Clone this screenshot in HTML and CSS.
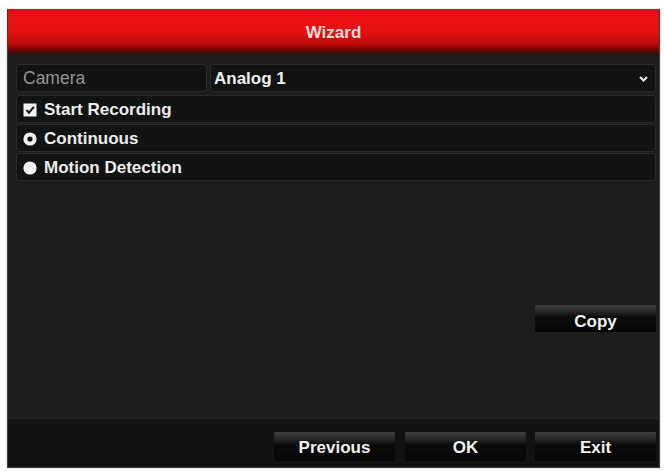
FILE: index.html
```html
<!DOCTYPE html>
<html>
<head>
<meta charset="utf-8">
<link rel="stylesheet" href="styles.css">
</head>
<body>
<div class="dialog">
  <div class="header">Wizard</div>
  <div class="content">
    <div class="camera-row">
      <div class="cell label">Camera</div>
      <div class="cell value">
        <span>Analog 1</span>
        <svg class="chevron" width="9" height="6" viewBox="0 0 9 6"><polyline points="1,1 4.5,4.5 8,1" fill="none" stroke="#eee" stroke-width="2"/></svg>
      </div>
    </div>
    <div class="options">
      <div class="row">
        <svg class="icon" width="14" height="14" viewBox="0 0 14 14"><rect x="0.5" y="0.5" width="13" height="13" fill="#f2f2f2"/><polyline points="3.5,7 6,9.8 10.8,3.8" fill="none" stroke="#111" stroke-width="2"/></svg>
        <span>Start Recording</span>
      </div>
      <div class="row">
        <svg class="icon" width="14" height="14" viewBox="0 0 14 14"><circle cx="7" cy="7" r="6.6" fill="#f2f2f2"/><circle cx="7" cy="7" r="2.6" fill="#111"/></svg>
        <span>Continuous</span>
      </div>
      <div class="row">
        <svg class="icon" width="14" height="14" viewBox="0 0 14 14"><circle cx="7" cy="7" r="6.6" fill="#f2f2f2"/></svg>
        <span>Motion Detection</span>
      </div>
    </div>
    <div class="copy-line">
      <button class="btn">Copy</button>
    </div>
  </div>
  <div class="footer">
    <button class="btn prev">Previous</button>
    <button class="btn">OK</button>
    <button class="btn">Exit</button>
  </div>
</div>
</body>
</html>
```
FILE: styles.css
```css
html, body {
  margin: 0;
  padding: 0;
  background: #ffffff;
}
body {
  width: 665px;
  height: 471px;
  font-family: "Liberation Sans", Arial, sans-serif;
  font-weight: bold;
  font-size: 17px;
}
.dialog {
  margin: 9px 0 0 7px;
  width: 651px;
  height: 458px;
  background: #1c1d1d;
  border: 1px solid #3c3c3c;
  border-top: none;
  display: flex;
  flex-direction: column;
  box-shadow: 0 0 2px rgba(0,0,0,0.25);
}
.header {
  height: 46px;
  flex: none;
  background: linear-gradient(#d4121a 0%, #ec1212 16%, #e31010 52%, #b80909 78%, #620707 91%, #1c1d1d 100%);
  color: #f7dcdc;
  display: flex;
  align-items: center;
  justify-content: center;
  padding-top: 1px;
  box-sizing: border-box;
}
.content {
  padding: 9px 3px 0 8px;
  display: flex;
  flex-direction: column;
}
.camera-row {
  display: flex;
  gap: 3px;
  height: 28px;
}
.cell {
  background: #121313;
  border: 1px solid #2a2b2b;
  border-radius: 3px;
  display: flex;
  align-items: center;
  box-sizing: border-box;
  padding-top: 1px;
}
.label {
  width: 191px;
  padding-left: 6px;
  color: #939393;
  font-weight: normal;
  font-size: 17.5px;
}
.value {
  flex: 1;
  padding-left: 3px;
  padding-right: 7px;
  color: #efefef;
  justify-content: space-between;
}
.chevron {
  display: block;
}
.options {
  margin-top: 3px;
  display: flex;
  flex-direction: column;
  gap: 1px;
}
.row {
  height: 28px;
  box-sizing: border-box;
  background: #121313;
  border: 1px solid #2a2b2b;
  border-radius: 3px;
  display: flex;
  align-items: center;
  padding-left: 6px;
  padding-top: 2px;
  gap: 7px;
  color: #ececec;
}
.icon {
  display: block;
  flex: none;
  margin-top: -1px;
}
.copy-line {
  display: flex;
  justify-content: flex-end;
  margin-top: 124px;
}
.btn {
  width: 121px;
  height: 28px;
  border: none;
  border-radius: 1px;
  padding: 0;
  margin: 0;
  background: linear-gradient(#3e3f3f 0%, #2a2a2a 22%, #0b0b0b 45%, #050505 100%);
  color: #f0f0f0;
  font-family: "Liberation Sans", Arial, sans-serif;
  font-weight: bold;
  font-size: 17px;
  display: flex;
  align-items: center;
  justify-content: center;
  padding-top: 2px;
  box-sizing: border-box;
}
.copy-line .btn {
  height: 27px;
  padding-top: 7px;
}
.footer {
  margin-top: auto;
  height: 49px;
  box-sizing: border-box;
  background: #111212;
  border-top: 1px solid #262727;
  display: flex;
  justify-content: flex-end;
  align-items: flex-start;
  padding: 13px 3px 0 0;
  gap: 9px;
}
.footer .btn {
  height: 29px;
}
.footer .prev {
  margin-right: 1px;
}
```
